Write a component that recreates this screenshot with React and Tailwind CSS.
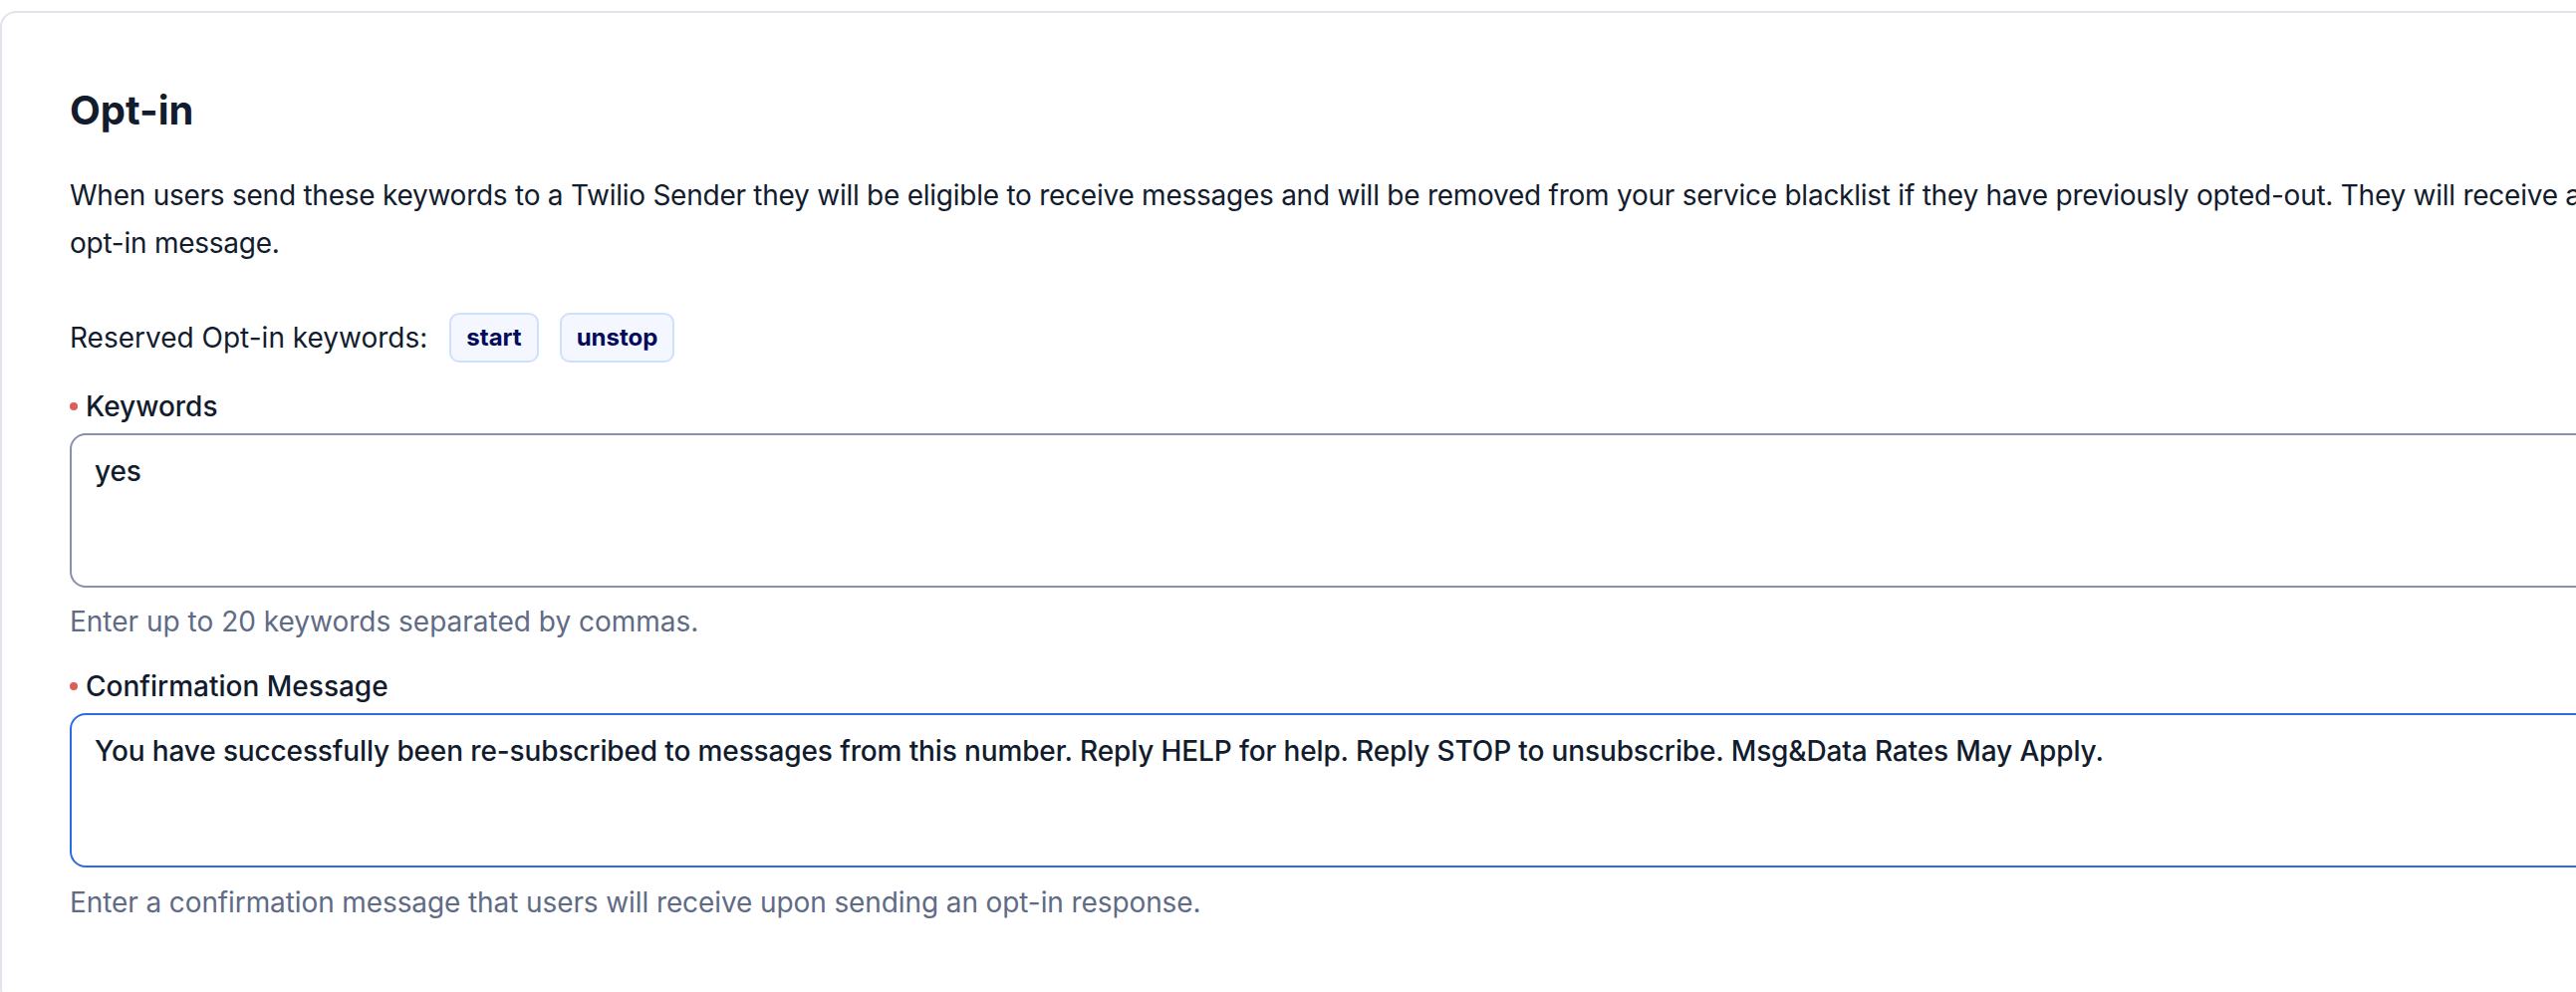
import React from 'react';

const reserved = ['start', 'unstop'];

const RequiredLabel = ({ children }) => (
  <div className="flex items-center leading-[40px] text-[28px] font-medium text-[#121c2d]">
    <span className="w-[8px] h-[8px] rounded-full bg-[#de5e57] mr-[8px]" />
    {children}
  </div>
);

const App = () => {
  return (
    <div className="min-h-screen bg-white overflow-hidden pt-[11px] font-['Inter',sans-serif]">
      <div className="w-[2800px] rounded-[16px] border-2 border-[#e1e3ea] pl-[68px] pr-[80px] pt-[72px] pb-[80px]">
        <h2 className="text-[40px] leading-[52px] font-bold text-[#121c2d]">Opt-in</h2>

        <p className="mt-[35px] w-[2575px] text-[28px] leading-[48px] tracking-[-0.25px] text-[#121c2d]">
          When users send these keywords to a Twilio Sender they will be eligible to receive messages and will be removed
          from your service blacklist if they have previously opted-out. They will receive an opt-in message.
        </p>

        <div className="mt-[46px] h-[50px] flex items-center">
          <span className="text-[28px] leading-[40px] text-[#121c2d] mr-[22px]">Reserved Opt-in keywords:</span>
          <div className="flex items-center gap-[21px]">
            {reserved.map((word) => (
              <span
                key={word}
                className="h-[50px] flex items-center px-[15px] rounded-[10px] border-2 border-[#cfe0fd] bg-[#f4f7ff] text-[24px] font-bold text-[#030b5d]"
              >
                {word}
              </span>
            ))}
          </div>
        </div>

        <div className="mt-[24px]">
          <RequiredLabel>Keywords</RequiredLabel>
          <textarea
            readOnly
            defaultValue="yes"
            className="mt-[7px] block w-full h-[155px] resize-none rounded-[16px] border-2 border-[#8891aa] bg-white px-[23px] py-[16px] text-[28px] leading-[40px] font-medium tracking-[-0.13px] text-[#121c2d] outline-none"
          />
          <p className="mt-[14px] text-[28px] leading-[40px] text-[#606b85]">Enter up to 20 keywords separated by commas.</p>
        </div>

        <div className="mt-[25px]">
          <RequiredLabel>Confirmation Message</RequiredLabel>
          <textarea
            readOnly
            defaultValue="You have successfully been re-subscribed to messages from this number. Reply HELP for help. Reply STOP to unsubscribe. Msg&Data Rates May Apply."
            className="mt-[7px] block w-full h-[155px] resize-none rounded-[16px] border-2 border-[#2b6be6] bg-white px-[23px] py-[16px] text-[28px] leading-[40px] font-medium tracking-[-0.13px] text-[#121c2d] outline-none"
          />
          <p className="mt-[15px] text-[28px] leading-[40px] tracking-[-0.1px] text-[#606b85]">
            Enter a confirmation message that users will receive upon sending an opt-in response.
          </p>
        </div>
      </div>
    </div>
  );
};

export default App;
